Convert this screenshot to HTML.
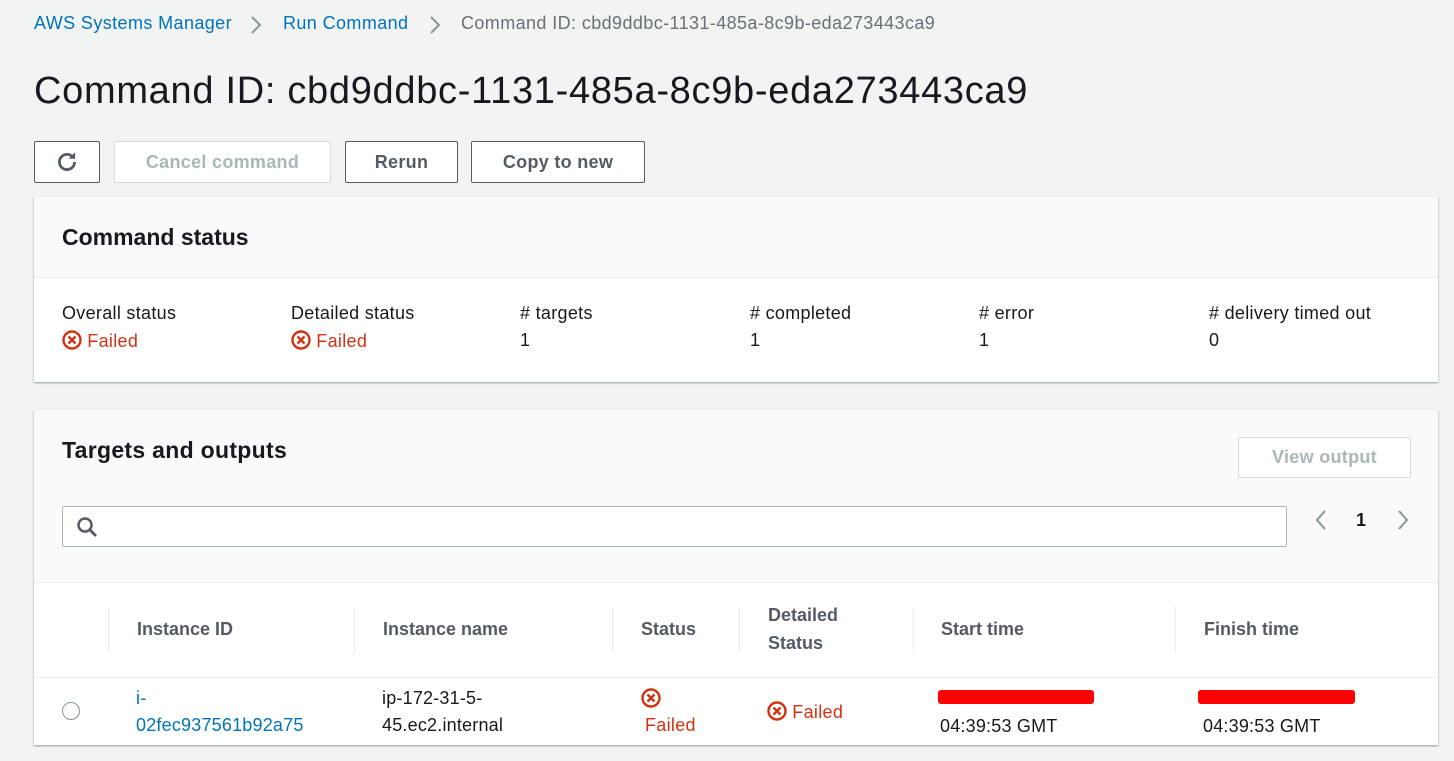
<!DOCTYPE html>
<html><head><meta charset="utf-8"><style>
*{box-sizing:border-box;margin:0;padding:0}
body{width:1454px;height:761px;background:#f2f3f3;font-family:"Liberation Sans",sans-serif;color:#16191f;position:relative;overflow:hidden}
.a{position:absolute;white-space:nowrap}
.link{color:#0073bb}
.btn{position:absolute;border:1px solid #545b64;border-radius:2px;background:#fff;font-weight:bold;font-size:18px;color:#545b64;display:flex;align-items:center;justify-content:center;letter-spacing:.3px}
.dis{border-color:#d5dbdb;color:#aab7b8}
.panel{position:absolute;left:34px;width:1404px;background:#fff;box-shadow:0 1px 2px rgba(0,28,36,.4)}
.lbl{font-size:18px;color:#16191f;letter-spacing:.3px}
.red{color:#d13212;font-size:18px;letter-spacing:.3px}
.th{font-weight:bold;font-size:18px;color:#545b64;line-height:28px}
.sep{position:absolute;width:1px;background:#eaeded}
</style></head><body>
<div class="a link" style="left:34px;top:13px;font-size:18px;letter-spacing:.4px">AWS Systems Manager</div>
<svg class="a" style="left:250px;top:15px" width="12" height="20"><path d="M2 2l8 8-8 8" stroke="#879596" stroke-width="2" fill="none"/></svg>
<div class="a link" style="left:283px;top:13px;font-size:18px;letter-spacing:.4px">Run Command</div>
<svg class="a" style="left:429px;top:15px" width="12" height="20"><path d="M2 2l8 8-8 8" stroke="#879596" stroke-width="2" fill="none"/></svg>
<div class="a" style="left:461px;top:13px;font-size:18px;color:#687078;letter-spacing:.4px">Command ID: cbd9ddbc-1131-485a-8c9b-eda273443ca9</div>
<div class="a" style="left:34px;top:70px;font-size:38px;letter-spacing:.7px">Command ID: cbd9ddbc-1131-485a-8c9b-eda273443ca9</div>

<div class="btn" style="left:34px;top:141px;width:66px;height:42px"><svg width="26" height="26" viewBox="0 0 24 24"><path d="M19 12a7 7 0 1 1-2.2-5.1" stroke="#545b64" stroke-width="2.6" fill="none"/><path d="M19.5 3v6h-6z" fill="#545b64"/></svg></div>
<div class="btn dis" style="left:114px;top:141px;width:217px;height:42px">Cancel command</div>
<div class="btn" style="left:345px;top:141px;width:113px;height:42px">Rerun</div>
<div class="btn" style="left:471px;top:141px;width:174px;height:42px">Copy to new</div>

<div class="panel" style="top:197px;height:185px">
<div style="height:81px;background:#fafafa;border-bottom:1px solid #eaeded"></div>
<div class="a" style="left:28px;top:27px;font-size:23px;font-weight:bold">Command status</div>
<div class="a lbl" style="left:28px;top:106px">Overall status</div>
<div class="a red" style="left:28px;top:133px"><span style="display:inline-block;vertical-align:-3px"><svg width="20" height="20"><circle cx="10" cy="10" r="8.5" stroke="#d13212" stroke-width="2.4" fill="none"/><path d="M6.5 6.5l7 7M13.5 6.5l-7 7" stroke="#d13212" stroke-width="2.4"/></svg></span> Failed</div>
<div class="a lbl" style="left:257px;top:106px">Detailed status</div>
<div class="a red" style="left:257px;top:133px"><span style="display:inline-block;vertical-align:-3px"><svg width="20" height="20"><circle cx="10" cy="10" r="8.5" stroke="#d13212" stroke-width="2.4" fill="none"/><path d="M6.5 6.5l7 7M13.5 6.5l-7 7" stroke="#d13212" stroke-width="2.4"/></svg></span> Failed</div>
<div class="a lbl" style="left:486px;top:106px"># targets</div><div class="a lbl" style="left:486px;top:133px">1</div>
<div class="a lbl" style="left:716px;top:106px"># completed</div><div class="a lbl" style="left:716px;top:133px">1</div>
<div class="a lbl" style="left:945px;top:106px"># error</div><div class="a lbl" style="left:945px;top:133px">1</div>
<div class="a lbl" style="left:1175px;top:106px"># delivery timed out</div><div class="a lbl" style="left:1175px;top:133px">0</div>
</div>

<div class="panel" style="top:410px;height:335px">
<div style="height:173px;background:#fafafa;border-bottom:1px solid #eaeded"></div>
<div class="a" style="left:28px;top:27px;font-size:23px;font-weight:bold;letter-spacing:.3px">Targets and outputs</div>
<div class="btn dis" style="left:1204px;top:27px;width:173px;height:41px">View output</div>
<div class="a" style="left:28px;top:96px;width:1225px;height:41px;border:1px solid #aab7b8;border-radius:2px;background:#fff"></div>
<svg class="a" style="left:42px;top:106px" width="22" height="22"><circle cx="9" cy="9" r="6.5" stroke="#545b64" stroke-width="2.5" fill="none"/><path d="M14 14l6 6" stroke="#545b64" stroke-width="2.8"/></svg>
<svg class="a" style="left:1280px;top:99px" width="14" height="22"><path d="M11 2L3 11l8 9" stroke="#879596" stroke-width="2" fill="none"/></svg>
<div class="a" style="left:1322px;top:100px;font-weight:bold;font-size:18px">1</div>
<svg class="a" style="left:1362px;top:99px" width="14" height="22"><path d="M3 2l8 9-8 9" stroke="#879596" stroke-width="2" fill="none"/></svg>
<div class="sep" style="left:74px;top:197px;height:46px"></div>
<div class="sep" style="left:320px;top:197px;height:46px"></div>
<div class="sep" style="left:578px;top:197px;height:46px"></div>
<div class="sep" style="left:705px;top:197px;height:46px"></div>
<div class="sep" style="left:879px;top:197px;height:46px"></div>
<div class="sep" style="left:1141px;top:197px;height:46px"></div>
<div class="a" style="left:0;top:267px;width:1404px;height:1px;background:#eaeded"></div>
<div class="a th" style="left:103px;top:205px">Instance ID</div>
<div class="a th" style="left:349px;top:205px">Instance name</div>
<div class="a th" style="left:607px;top:205px">Status</div>
<div class="a th" style="left:734px;top:191px">Detailed<br>Status</div>
<div class="a th" style="left:907px;top:205px">Start time</div>
<div class="a th" style="left:1170px;top:205px">Finish time</div>
<div class="a" style="left:28px;top:292px;width:18px;height:18px;border:1px solid #879596;border-radius:50%"></div>
<div class="a link" style="left:102px;top:275px;font-size:18px;line-height:27px;letter-spacing:.2px">i-<br>02fec937561b92a75</div>
<div class="a" style="left:348px;top:275px;font-size:18px;line-height:27px;letter-spacing:.2px">ip-172-31-5-<br>45.ec2.internal</div>
<svg class="a" style="left:606px;top:277px" width="22" height="22"><circle cx="11" cy="11" r="8.5" stroke="#d13212" stroke-width="2.4" fill="none"/><path d="M7.5 7.5l7 7M14.5 7.5l-7 7" stroke="#d13212" stroke-width="2.4"/></svg>
<div class="a red" style="left:611px;top:305px">Failed</div>
<div class="a red" style="left:733px;top:291px"><span style="display:inline-block;vertical-align:-3px"><svg width="20" height="20"><circle cx="10" cy="10" r="8.5" stroke="#d13212" stroke-width="2.4" fill="none"/><path d="M6.5 6.5l7 7M13.5 6.5l-7 7" stroke="#d13212" stroke-width="2.4"/></svg></span> Failed</div>
<div class="a" style="left:904px;top:280px;width:156px;height:14px;background:#f00;border-radius:3px"></div>
<div class="a" style="left:906px;top:306px;font-size:18px;letter-spacing:.2px">04:39:53 GMT</div>
<div class="a" style="left:1164px;top:280px;width:157px;height:14px;background:#f00;border-radius:3px"></div>
<div class="a" style="left:1169px;top:306px;font-size:18px;letter-spacing:.2px">04:39:53 GMT</div>
</div>
</body></html>
